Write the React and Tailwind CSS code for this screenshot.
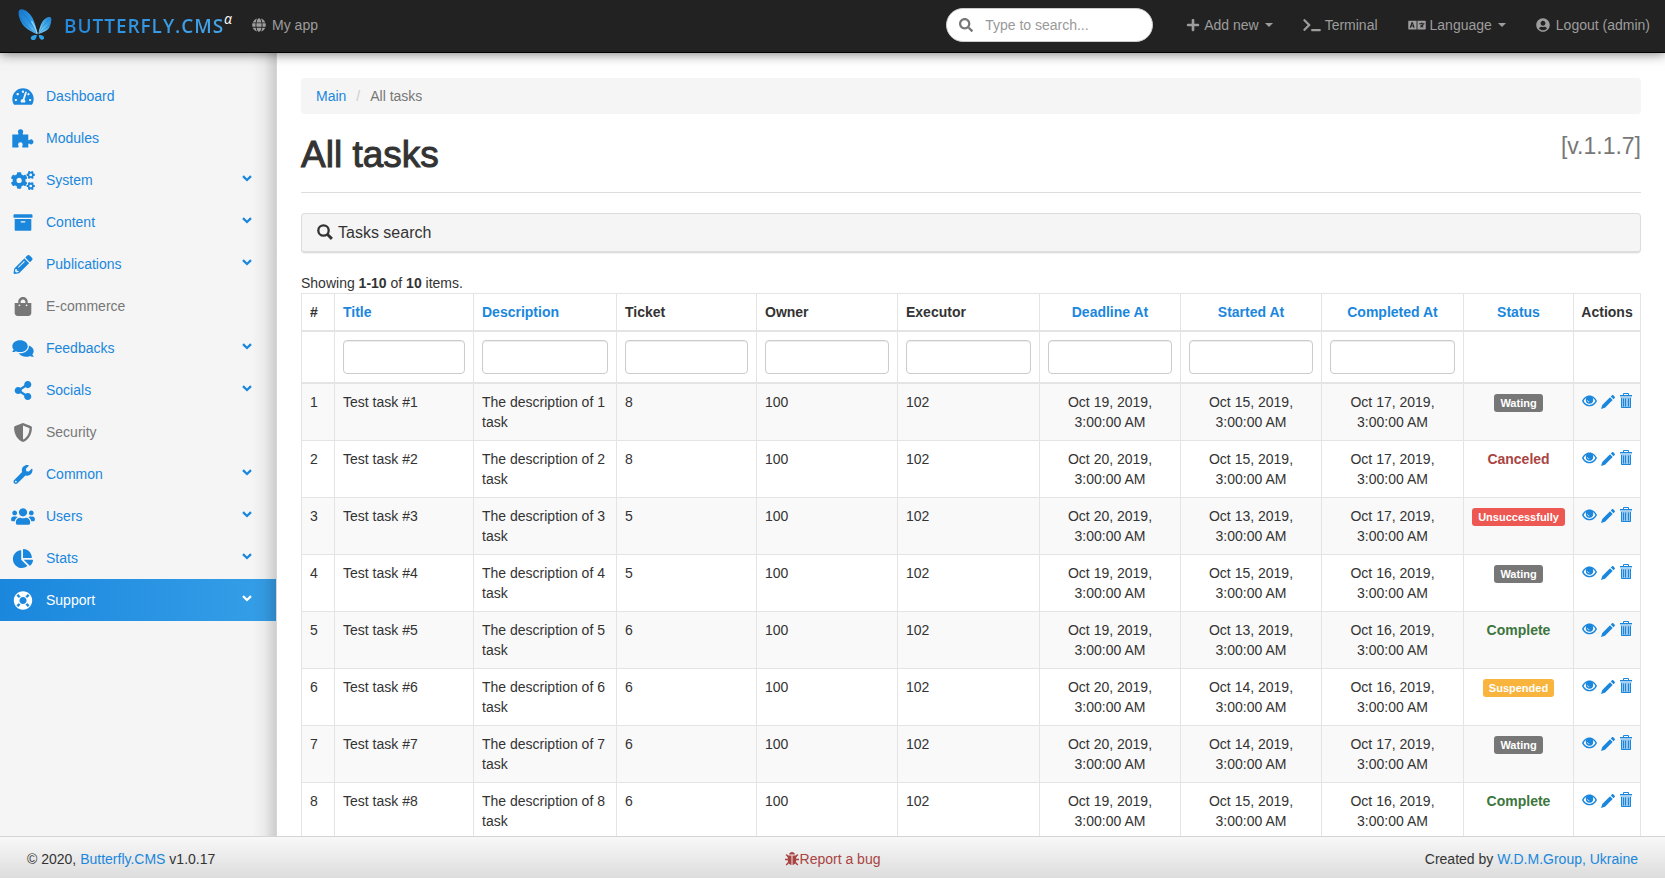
import React from "react";
import {
  FaTachometerAlt, FaCogs, FaArchive, FaPencilAlt, FaShoppingBag, FaComments,
  FaShareAlt, FaShieldAlt, FaWrench, FaUsers, FaChartPie, FaLifeRing, FaGlobe, FaSearch,
  FaPlus, FaTerminal, FaLanguage, FaUserCircle,
} from "react-icons/fa";

function Puzzle({ className }) {
  return (
    <svg viewBox="0 0 24 19" className={className} aria-hidden="true">
      <path d="M1.300 5.500h5.200c.9 0 1.200-.6.800-1.300A2.500 2.500 0 0 1 9.500.300a2.500 2.500 0 0 1 2.300 3.900c-.4.700-.1 1.300.8 1.300h4.700v4.900c0 .8.500 1.100 1.200.7a2.400 2.400 0 1 1 0 3.600c-.7-.4-1.200-.1-1.200.7v3.100h-5.500c-.7 0-.9-.5-.6-1.200.3-.6.500-1 .5-1.700a2.300 2.300 0 1 0-4.600 0c0 .7.200 1.100.5 1.700.3.700.1 1.200-.6 1.200H1.300Z" fill="currentColor" />
    </svg>
  );
}

const menu = [
  { label: "Dashboard", icon: FaTachometerAlt },
  { label: "Modules", icon: Puzzle },
  { label: "System", icon: FaCogs, sub: true },
  { label: "Content", icon: FaArchive, sub: true },
  { label: "Publications", icon: FaPencilAlt, sub: true },
  { label: "E-commerce", icon: FaShoppingBag, disabled: true },
  { label: "Feedbacks", icon: FaComments, sub: true },
  { label: "Socials", icon: FaShareAlt, sub: true },
  { label: "Security", icon: FaShieldAlt, disabled: true },
  { label: "Common", icon: FaWrench, sub: true },
  { label: "Users", icon: FaUsers, sub: true },
  { label: "Stats", icon: FaChartPie, sub: true },
  { label: "Support", icon: FaLifeRing, sub: true, active: true },
];

const columns = [
  { label: "#", width: "w-[33px]" },
  { label: "Title", width: "w-[139px]", sort: true, filter: true },
  { label: "Description", width: "w-[143px]", sort: true, filter: true },
  { label: "Ticket", width: "w-[140px]", filter: true },
  { label: "Owner", width: "w-[141px]", filter: true },
  { label: "Executor", width: "w-[142px]", filter: true },
  { label: "Deadline At", width: "w-[141px]", sort: true, filter: true, center: true },
  { label: "Started At", width: "w-[141px]", sort: true, filter: true, center: true },
  { label: "Completed At", width: "w-[142px]", sort: true, filter: true, center: true },
  { label: "Status", width: "w-[110px]", sort: true, center: true },
  { label: "Actions", width: "w-[67px]", center: true },
];

const tasks = [
  [1, 8, "19", "15", "17", "Wating"],
  [2, 8, "20", "15", "17", "Canceled"],
  [3, 5, "20", "13", "17", "Unsuccessfully"],
  [4, 5, "19", "15", "16", "Wating"],
  [5, 6, "19", "13", "16", "Complete"],
  [6, 6, "20", "14", "16", "Suspended"],
  [7, 6, "20", "14", "17", "Wating"],
  [8, 6, "19", "15", "16", "Complete"],
];

const badge = "inline-block rounded-[3px] px-1.5 pt-1 pb-[3px] text-[11px] leading-[11px] font-bold text-white";
const statusStyles = {
  Wating: badge + " bg-[#777777]",
  Unsuccessfully: badge + " bg-[#ee5852]",
  Suspended: badge + " bg-[#f8b43c]",
  Canceled: "font-bold text-[#a94442]",
  Complete: "font-bold text-[#3c763d]",
};

function Logo() {
  return (
    <svg viewBox="0 0 34 34" className="h-[34px] w-[34px]" aria-hidden="true">
      <defs>
        <linearGradient id="wing" x1="0" y1="0" x2="1" y2="1">
          <stop offset="0" stopColor="#1673c8" />
          <stop offset="0.55" stopColor="#2c97e4" />
          <stop offset="1" stopColor="#7fd4fb" />
        </linearGradient>
        <linearGradient id="wingRight" x1="1" y1="0" x2="0" y2="1">
          <stop offset="0" stopColor="#1b7ccf" />
          <stop offset="0.5" stopColor="#45aeea" />
          <stop offset="1" stopColor="#9be2ff" />
        </linearGradient>
      </defs>
      <path d="M1.2 2.2C3.6-.3 9 2.3 12.6 7c3.2 4.300 5.300 10.500 6.900 19.200C16.500 25.200 8 21 5 17 1.500 12.500-.7 5 1.200 2.200Z" fill="url(#wing)" />
      <path d="M5.500 5.500c5 5.500 9 12 13.500 20M2 9c4 7 10 12.500 16.500 16.500" fill="none" stroke="#1668b4" strokeWidth="0.7" opacity="0.7" />
      <path d="M13.500 13c2.500 4 4.500 8 5.700 12.500" stroke="#8edcff" strokeWidth="1.200" fill="none" />
      <path d="M32.800 9.500c-2.400-1.700-7 1.500-9 5.200-1.500 2.900-2.700 6.500-3.300 11.200 3.200-1 9.300-3 11-6.700 1.500-3.300 2.600-8.600 1.300-9.700Z" fill="url(#wingRight)" />
      <path d="M30.500 12c-4 3.500-7.200 8-9.700 13M32 17c-4 3-7.500 5.700-10.800 8.200" fill="none" stroke="#1871bd" strokeWidth="0.700" opacity="0.700" />
      <path d="M18.800 27c-3.500-.2-6.300 1.200-6 3.200.3 2 3 2.500 4.300 1.200 1.200-1.200 1.500-2.900 1.700-4.400Z" fill="#2ea3e8" />
      <path d="M20.800 27c3.200-.2 5.600 1.200 5.300 3-.3 1.900-2.700 2.300-3.800 1.100-1.100-1.100-1.400-2.600-1.500-4.100Z" fill="#2ea3e8" />
    </svg>
  );
}

function Chevron() {
  return (
    <svg viewBox="0 0 10 7" className="mb-1 h-[7px] w-[10px]" aria-hidden="true">
      <path d="M1 1.200 5 5l4-3.800" fill="none" stroke="currentColor" strokeWidth="2.300" />
    </svg>
  );
}

function Caret() {
  return (
    <svg viewBox="0 0 8 4" className="ml-[6px] h-1 w-2" aria-hidden="true">
      <path d="M0 0h8L4 4Z" fill="currentColor" />
    </svg>
  );
}

function Eye() {
  return (
    <svg viewBox="0 0 15 12" className="h-3 w-[15px]" aria-hidden="true">
      <path d="M7.500 0.500C4 .5 1.200 3 0 6c1.200 3 4 5.300 7.500 5.300S13.800 9 15 6C13.800 3 11 .5 7.500.5Zm0 9.400C4.900 9.900 2.700 8.300 1.600 6c.6-1.300 1.500-2.300 2.500-3 2-1 4.800-1 6.800 0 1 .7 1.900 1.700 2.500 3-1.100 2.300-3.300 3.900-5.900 3.900Z" fill="currentColor" fillRule="evenodd" />
      <circle cx="7.500" cy="5" r="3.700" fill="currentColor" />
      <path d="M5.400 5.200c0 1.100.9 1.700 1.900 1.500" fill="none" stroke="#ffffff" strokeWidth="0.900" opacity="0.800" />
    </svg>
  );
}

function Pencil() {
  return (
    <svg viewBox="0 0 14 14" className="h-3.5 w-3.5" aria-hidden="true">
      <path d="M0 14l1.300-4L9 2.300l2.700 2.700L4 12.700ZM9.800 1.500 11 .3c.4-.4.900-.4 1.300 0l1.400 1.400c.4.400.4.900 0 1.300l-1.200 1.200Z" fill="currentColor" />
    </svg>
  );
}

function Trash() {
  return (
    <svg viewBox="0 0 14 15" className="h-[15px] w-3.5" aria-hidden="true">
      <path d="M4.500 2V.500h5V2" fill="none" stroke="currentColor" />
      <path d="M1 2h12v1H1Z" fill="currentColor" />
      <path d="M1 3h12v1.500H1Z" fill="currentColor" opacity="0.400" />
      <path d="M2 4.500h10V14a1 1 0 0 1-1 1H3a1 1 0 0 1-1-1Z" fill="currentColor" opacity="0.450" />
      <path d="M2.500 5v9.500h9V5M4.500 5.500v8M6.500 5.500v8M9.500 5.500v8" fill="none" stroke="currentColor" />
    </svg>
  );
}

function Bug() {
  return (
    <svg viewBox="0 0 14 14" className="h-3.5 w-3.5" aria-hidden="true">
      <path d="M4 2.600C4.300 1 5.500 0 7 0s2.700 1 3 2.600Z" fill="currentColor" />
      <path d="M2.800 3.500h3.700V13C4.300 12.800 2.800 11 2.800 8.500ZM7.500 3.500h3.700V8.500c0 2.500-1.500 4.300-3.700 4.500Z" fill="currentColor" />
      <path d="M1.200 2.500 3.500 5M12.800 2.500 10.500 5M0 7.500h3.500M14 7.500h-3.500M1.200 13l2.600-2.800M12.800 13l-2.600-2.800" stroke="currentColor" strokeWidth="1.500" fill="none" />
    </svg>
  );
}

function SearchGlyph() {
  return (
    <svg viewBox="0 0 16 16" className="mb-0.5 h-4 w-4" aria-hidden="true">
      <circle cx="6.500" cy="6.500" r="5.200" fill="none" stroke="currentColor" strokeWidth="2.300" />
      <path d="m10.300 10.300 4.600 4.600" stroke="currentColor" strokeWidth="2.900" />
    </svg>
  );
}

function Navbar() {
  return (
    <header className="relative z-20 flex h-[53px] shrink-0 items-start border-b border-black bg-[#222222] text-[#9d9d9d] shadow-[0_0_12px_rgba(0,0,0,0.6)]">
      <a href="#home" className="flex h-[50px] items-center pl-[18px]">
        <Logo />
        <span className="ml-3 bg-linear-to-r from-[#2389dc] to-[#45a5ea] bg-clip-text pt-0.5 font-['Open_Sans',sans-serif] text-[19px] leading-5 font-semibold tracking-wider text-transparent">BUTTERFLY.CMS</span>
        <sup className="-top-1.5 font-['Open_Sans',sans-serif] text-sm leading-4 text-white italic">α</sup>
      </a>
      <a href="#app" className="ml-5 flex h-[50px] items-center gap-1.5">
        <FaGlobe className="h-3.5 w-3.5" />
        My app
      </a>
      <form className="mt-2 mr-[18px] ml-auto flex h-[34px] w-[207px] items-center gap-3 rounded-full border border-[#cccccc] bg-white px-3">
        <FaSearch className="h-3.5 w-3.5 shrink-0 text-[#777777]" />
        <input type="text" aria-label="Search" placeholder="Type to search..." className="w-full min-w-0 text-sm text-[#555555] outline-none placeholder:text-[#999999]" />
      </form>
      <nav className="flex h-[50px]">
        <button type="button" className="flex items-center px-[15px]">
          <FaPlus className="mr-1 h-3.5 w-3.5" />Add new<Caret />
        </button>
        <a href="#terminal" className="flex items-center px-[15px]">
          <FaTerminal className="mr-1 h-3.5 w-[18px]" />Terminal
        </a>
        <button type="button" className="flex items-center px-[15px]">
          <FaLanguage className="mr-1 h-3.5 w-[18px]" />Language<Caret />
        </button>
        <a href="#logout" className="flex items-center px-[15px]">
          <FaUserCircle className="mr-1.5 h-3.5 w-3.5" />Logout (admin)
        </a>
      </nav>
    </header>
  );
}

function Sidebar() {
  return (
    <aside className="relative w-[277px] shrink-0 border-r border-[#d6d6d6] bg-[#f5f5f5] pt-[22px]">
      <ul>
        {menu.map(({ label, icon: Icon, sub, disabled, active }) => (
          <li key={label}>
            <a
              href="#menu"
              className={
                "flex h-[42px] items-center pr-6 pl-[11px] " +
                (active
                  ? "bg-linear-to-r from-[#1a87dd] to-[#359fe8] text-white"
                  : disabled
                    ? "text-[#777777]"
                    : "text-[#1a87dd]")
              }
            >
              <Icon className="h-[19px] w-6 shrink-0" />
              <span className="ml-[11px] grow">{label}</span>
              {sub && <Chevron />}
            </a>
          </li>
        ))}
      </ul>
      <div className="pointer-events-none absolute inset-y-0 right-0 w-6 bg-linear-to-r from-transparent via-black/4 to-black/16" />
    </aside>
  );
}

function TaskTable() {
  const cell = "border border-[#e4e4e4] p-2 align-top";
  return (
    <table className="w-full table-fixed border-collapse">
      <colgroup>
        {columns.map((c) => <col key={c.label} className={c.width} />)}
      </colgroup>
      <thead>
        <tr>
          {columns.map((c) => (
            <th key={c.label} className={"border border-b-2 border-[#e4e4e4] py-2 font-bold " + (c.label === "Actions" ? "px-0 " : "px-2 ") + (c.center ? "text-center" : "text-left")}>
              {c.sort ? <a href="#sort" className="text-[#1a87dd]">{c.label}</a> : c.label}
            </th>
          ))}
        </tr>
        <tr>
          {columns.map((c) => (
            <td key={c.label} className="border border-b-2 border-[#e4e4e4] p-2">
              {c.filter && (
                <input type="text" aria-label={c.label} className="block h-[34px] w-full rounded border border-[#cccccc] bg-white px-3 shadow-[inset_0_1px_1px_rgba(0,0,0,0.075)]" />
              )}
            </td>
          ))}
        </tr>
      </thead>
      <tbody>
        {tasks.map(([n, ticket, deadline, started, completed, status]) => (
          <tr key={n} className="odd:bg-[#f9f9f9]">
            <td className={cell}>{n}</td>
            <td className={cell}>Test task #{n}</td>
            <td className={cell}>The description of {n} task</td>
            <td className={cell}>{ticket}</td>
            <td className={cell}>100</td>
            <td className={cell}>102</td>
            {[deadline, started, completed].map((day, i) => (
              <td key={i} className={cell + " text-center"}>Oct {day}, 2019,<br />3:00:00 AM</td>
            ))}
            <td className={cell + " text-center whitespace-nowrap"}><span className={statusStyles[status]}>{status}</span></td>
            <td className="border border-[#e4e4e4] px-0 py-2 align-top">
              <div className="flex h-5 items-start justify-center gap-1 text-[#1a87dd]">
                <a href="#view" aria-label="View" className="pt-[3px]"><Eye /></a>
                <a href="#edit" aria-label="Update" className="pt-[3px]"><Pencil /></a>
                <a href="#delete" aria-label="Delete" className="pt-px"><Trash /></a>
              </div>
            </td>
          </tr>
        ))}
      </tbody>
    </table>
  );
}

export default function App() {
  return (
    <div className="flex h-screen flex-col overflow-hidden bg-white font-['Liberation_Sans',Arial,sans-serif] text-sm text-[#333333]">
      <Navbar />
      <div className="flex min-h-0 grow">
        <Sidebar />
        <main className="min-w-0 grow overflow-y-auto px-6 pt-[25px] [scrollbar-width:none]">
          <ol className="flex rounded bg-[#f5f5f5] px-[15px] py-2">
            <li><a href="#main" className="text-[#1a87dd]">Main</a></li>
            <li className="px-2.5 text-[#cccccc]">/</li>
            <li className="text-[#777777]">All tasks</li>
          </ol>
          <div className="flex items-start justify-between border-b border-[#dddddd] pt-5 pb-4">
            <h1 className="text-[37px] leading-[42px] font-medium [-webkit-text-stroke:1px_#333333]">All tasks</h1>
            <small className="text-[23px] leading-6 text-[#777777]">[v.1.1.7]</small>
          </div>
          <section className="mt-5 rounded border border-b-2 border-[#dddddd] bg-[#f5f5f5] px-[15px] pt-[9px] pb-2 shadow-[0_1px_1px_rgba(0,0,0,0.05)]">
            <h4 className="flex h-5 items-center gap-[5px] text-base leading-5 font-medium">
              <SearchGlyph />
              Tasks search
            </h4>
          </section>
          <div className="pt-5 leading-5">Showing <b>1-10</b> of <b>10</b> items.</div>
          <TaskTable />
        </main>
      </div>
      <footer className="relative z-10 grid h-[42px] shrink-0 grid-cols-3 items-center border-t border-[#d4d4d4] bg-linear-to-b from-[#f8f8f8] to-[#dddddd] px-[27px] pt-[3px]">
        <p>© 2020, <a href="#cms" className="text-[#1a87dd]">Butterfly.CMS</a> v1.0.17</p>
        <a href="#bug" className="flex items-center gap-px justify-self-center text-[#a94442]"><Bug />Report a bug</a>
        <p className="text-right">Created by <a href="#group" className="text-[#1a87dd]">W.D.M.Group, Ukraine</a></p>
      </footer>
    </div>
  );
}
